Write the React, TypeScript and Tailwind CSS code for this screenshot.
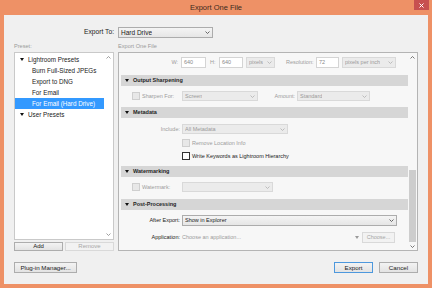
import React from "react";

const Chevron = ({ color = "#555" }: { color?: string }) => (
  <svg width="5" height="3" viewBox="0 0 5 3" className="shrink-0">
    <path d="M0.5 0.5 L2.5 2.5 L4.5 0.5" stroke={color} fill="none" strokeWidth="0.8" />
  </svg>
);

const ChevronUp = ({ color = "#555" }: { color?: string }) => (
  <svg width="5" height="3" viewBox="0 0 5 3" className="shrink-0">
    <path d="M0.5 2.5 L2.5 0.5 L4.5 2.5" stroke={color} fill="none" strokeWidth="0.8" />
  </svg>
);

const Tri = ({ color = "#111" }: { color?: string }) => (
  <svg width="4" height="3" viewBox="0 0 4 3" className="shrink-0">
    <polygon points="0,0 4,0 2,3" fill={color} />
  </svg>
);

type SelectProps = { text?: string; w: string; disabled?: boolean; h?: string };

const Select = ({ text = "", w, disabled, h = "h-[10px]" }: SelectProps) => (
  <div
    className={
      disabled
        ? `${w} ${h} shrink-0 flex items-center justify-between pl-[2px] pr-[2px] border border-[#d9d9d9] bg-[#ebebeb] text-[#9a9a9a]`
        : `${w} ${h} shrink-0 flex items-center justify-between pl-[2px] pr-[2px] border border-[#acacac] bg-gradient-to-b from-[#f4f4f4] to-[#e6e6e6] text-[#1a1a1a]`
    }
  >
    <span className="truncate">{text}</span>
    <Chevron color={disabled ? "#b0b0b0" : "#444"} />
  </div>
);

const Input = ({ value, w }: { value: string; w: string }) => (
  <div className={`${w} h-[11px] shrink-0 flex items-center pl-[2px] bg-white border border-[#d4d4d4] text-[#8a8a8a]`}>
    {value}
  </div>
);

const Check = ({ disabled }: { disabled?: boolean }) => (
  <div
    className={
      disabled
        ? "w-[8px] h-[8px] shrink-0 border border-[#cfcfcf] bg-[#e8e8e8]"
        : "w-[8px] h-[8px] shrink-0 border border-[#333] bg-white"
    }
  />
);

const Header = ({ title, mt }: { title: string; mt: string }) => (
  <div className={`${mt} ml-[2px] h-[11px] shrink-0 flex items-center pl-[4px] bg-[#d6d6d6] font-bold text-[#1e1e1e]`}>
    <Tri />
    <span className="ml-[4px]">{title}</span>
  </div>
);

const Button = ({ label, w, h = "h-[11px]", primary, disabled }: { label: string; w: string; h?: string; primary?: boolean; disabled?: boolean }) => (
  <div
    className={
      disabled
        ? `${w} ${h} flex items-center justify-center border border-[#d9d9d9] bg-[#f2f2f2] text-[#a6a6a6]`
        : primary
        ? `${w} ${h} flex items-center justify-center border border-[#4d98dd] bg-gradient-to-b from-[#f3f3f3] to-[#e3e3e3] text-[#1a1a1a]`
        : `${w} ${h} flex items-center justify-center border border-[#adadad] bg-gradient-to-b from-[#f3f3f3] to-[#e3e3e3] text-[#1a1a1a]`
    }
  >
    {label}
  </div>
);

const presets = ["Burn Full-Sized JPEGs", "Export to DNG", "For Email"];

export default function App() {
  return (
    <div className="w-[432px] h-[288px] bg-[#ee9166] flex flex-col overflow-hidden font-['Liberation_Sans',Arial,sans-serif]">
      {/* title bar */}
      <div className="relative h-[15px] shrink-0 flex items-center justify-center text-[7.5px] text-[#3b2a20]">
        Export One File
        <div className="absolute right-[3px] top-0 w-[15px] h-[10px] bg-[#c75050] flex items-center justify-center">
          <svg width="5" height="5" viewBox="0 0 5 5">
            <path d="M0.5 0.5 L4.5 4.5 M4.5 0.5 L0.5 4.5" stroke="#fff" strokeWidth="1" />
          </svg>
        </div>
      </div>

      <div className="mx-[4px] mb-[4px] flex-1 bg-[#f0f0f0] flex flex-col px-[10px]">
        {/* export to */}
        <div className="mt-[12px] h-[11px] flex items-center">
          <div className="w-[100px] text-right text-[6.7px] text-[#1a1a1a]">Export To:</div>
          <div className="ml-[4px] text-[6.5px]">
            <Select text="Hard Drive" w="w-[95px]" h="h-[11px]" />
          </div>
        </div>

        {/* labels */}
        <div className="mt-[4px] h-[8px] flex items-center text-[5.6px] text-[#9a9a9a]">
          <div className="w-[104px]">Preset:</div>
          <div>Export One File</div>
        </div>

        {/* columns */}
        <div className="mt-[2px] h-[199px] flex gap-[4px]">
          {/* presets */}
          <div className="w-[100px] flex flex-col">
            <div className="h-[188px] flex bg-white border border-[#c9c9c9] text-[6.3px] text-[#1a1a1a]">
              <div className="flex-1 flex flex-col pt-[1px]">
                <div className="h-[11px] flex items-center pl-[5px]">
                  <Tri />
                  <span className="ml-[4px]">Lightroom Presets</span>
                </div>
                {presets.map((p) => (
                  <div key={p} className="h-[11px] flex items-center pl-[17px]">
                    {p}
                  </div>
                ))}
                <div className="h-[11px] flex items-center pl-[17px] bg-[#3399ff] text-white">For Email (Hard Drive)</div>
                <div className="h-[11px] flex items-center pl-[5px]">
                  <Tri />
                  <span className="ml-[4px]">User Presets</span>
                </div>
              </div>
              <div className="w-[9px] flex flex-col justify-between items-center py-[3px]">
                <ChevronUp color="#888" />
                <Chevron color="#888" />
              </div>
            </div>
            <div className="mt-[2px] flex gap-[2px] text-[6px]">
              <Button label="Add" w="w-[49px]" h="h-[9px]" />
              <Button label="Remove" w="w-[49px]" h="h-[9px]" disabled />
            </div>
          </div>

          {/* export settings */}
          <div className="w-[300px] flex border border-[#b4b4b4] bg-[#f7f7f7] text-[5.5px] text-[#9c9c9c]">
            <div className="flex-1 flex flex-col">
              {/* size row */}
              <div className="mt-[4px] h-[11px] flex items-center">
                <div className="w-[59px] text-right">W:</div>
                <div className="ml-[3px]">
                  <Input value="640" w="w-[25px]" />
                </div>
                <div className="ml-[4px] w-[9px]">H:</div>
                <Input value="640" w="w-[24px]" />
                <div className="ml-[3px]">
                  <Select text="pixels" w="w-[29px]" h="h-[11px]" disabled />
                </div>
                <div className="ml-[11px] w-[30px]">Resolution:</div>
                <Input value="72" w="w-[23px]" />
                <div className="ml-[3px]">
                  <Select text="pixels per inch" w="w-[54px]" h="h-[11px]" disabled />
                </div>
              </div>

              <Header title="Output Sharpening" mt="mt-[7px]" />
              <div className="mt-[5px] h-[10px] flex items-center">
                <div className="w-[61px] flex items-center pl-[13px]">
                  <Check disabled />
                  <span className="ml-[2px]">Sharpen For:</span>
                </div>
                <div className="ml-[2px]">
                  <Select text="Screen" w="w-[76px]" disabled />
                </div>
                <div className="w-[37px] text-right">Amount:</div>
                <div className="ml-[2px]">
                  <Select text="Standard" w="w-[73px]" disabled />
                </div>
              </div>

              <Header title="Metadata" mt="mt-[6px]" />
              <div className="mt-[6px] h-[10px] flex items-center">
                <div className="w-[61px] text-right">Include:</div>
                <div className="ml-[2px]">
                  <Select text="All Metadata" w="w-[106px]" disabled />
                </div>
              </div>
              <div className="mt-[4px] h-[10px] flex items-center pl-[63px]">
                <Check disabled />
                <span className="ml-[2px]">Remove Location Info</span>
              </div>
              <div className="mt-[3px] h-[10px] flex items-center pl-[63px] text-[#1a1a1a]">
                <Check />
                <span className="ml-[2px]">Write Keywords as Lightroom Hierarchy</span>
              </div>

              <Header title="Watermarking" mt="mt-[5px]" />
              <div className="mt-[5px] h-[10px] flex items-center">
                <div className="w-[61px] flex items-center pl-[13px]">
                  <Check disabled />
                  <span className="ml-[2px]">Watermark:</span>
                </div>
                <div className="ml-[2px]">
                  <Select w="w-[91px]" disabled />
                </div>
              </div>

              <Header title="Post-Processing" mt="mt-[7px]" />
              <div className="mt-[5px] h-[11px] flex items-center text-[#1a1a1a]">
                <div className="w-[61px] text-right">After Export:</div>
                <div className="ml-[2px]">
                  <Select text="Show in Explorer" w="w-[215px]" h="h-[11px]" />
                </div>
              </div>
              <div className="mt-[6px] h-[11px] flex items-center">
                <div className="w-[61px] text-right text-[#1a1a1a]">Application:</div>
                <div className="ml-[2px] w-[180px] flex items-center justify-between pr-[3px]">
                  <span>Choose an application...</span>
                  <Tri color="#9a9a9a" />
                </div>
                <Button label="Choose..." w="w-[33px]" disabled />
              </div>
            </div>

            {/* scrollbar */}
            <div className="w-[9px] flex flex-col">
              <div className="h-[9px] flex items-center justify-center">
                <ChevronUp color="#555" />
              </div>
              <div className="flex-1 flex flex-col">
                <div className="mt-auto mx-[1px] h-[72px] bg-[#cdcdcd]" />
              </div>
              <div className="h-[8px] flex items-center justify-center">
                <Chevron color="#555" />
              </div>
            </div>
          </div>
        </div>

        {/* bottom buttons */}
        <div className="mt-[11px] h-[11px] flex justify-between text-[6.2px]">
          <Button label="Plug-in Manager..." w="w-[63px]" />
          <div className="flex gap-[6px]">
            <Button label="Export" w="w-[39px]" primary />
            <Button label="Cancel" w="w-[39px]" />
          </div>
        </div>
      </div>
    </div>
  );
}
